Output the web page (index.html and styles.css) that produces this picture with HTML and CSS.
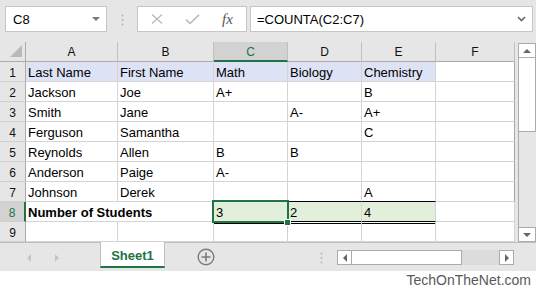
FILE: index.html
```html
<!DOCTYPE html>
<html lang="en">
<head>
    <meta charset="UTF-8">
    <meta name="viewport" content="width=device-width, initial-scale=1.0">
    <title>COUNTA example</title>
    <link rel="stylesheet" href="styles.css">
</head>
<body>
    <div class="formula-bar">
        <div class="name-box">
            <span>C8</span>
            <span class="caret"></span>
        </div>
        <svg class="grip" width="3" height="12" viewBox="0 0 3 12">
            <circle cx="1.5" cy="1.5" r="1" fill="#b5b5b5"/>
            <circle cx="1.5" cy="6" r="1" fill="#b5b5b5"/>
            <circle cx="1.5" cy="10.5" r="1" fill="#b5b5b5"/>
        </svg>
        <div class="fx-buttons">
            <svg class="btn-cancel" width="12" height="10" viewBox="0 0 12 10">
                <path d="M1 0.5 L11 9.5 M11 0.5 L1 9.5" stroke="#b9b9b9" stroke-width="1.3" fill="none"/>
            </svg>
            <svg class="btn-enter" width="15" height="11" viewBox="0 0 15 11">
                <path d="M1 5.5 L5 9.5 L14 0.8" stroke="#b9b9b9" stroke-width="1.6" fill="none"/>
            </svg>
            <span class="fx">fx</span>
        </div>
        <div class="formula-input">
            <span>=COUNTA(C2:C7)</span>
            <svg width="9" height="6" viewBox="0 0 9 6">
                <path d="M1 1 L4.5 4.5 L8 1" stroke="#666" stroke-width="1.6" fill="none"/>
            </svg>
        </div>
    </div>

    <div class="sheet">
        <div class="grid">
            <div class="corner"><span class="select-all"></span></div>
            <div class="col-head">A</div>
            <div class="col-head">B</div>
            <div class="col-head sel">C</div>
            <div class="col-head">D</div>
            <div class="col-head">E</div>
            <div class="col-head">F</div>

            <div class="row-head">1</div>
            <div class="cell title">Last Name</div>
            <div class="cell title">First Name</div>
            <div class="cell title">Math</div>
            <div class="cell title">Biology</div>
            <div class="cell title">Chemistry</div>
            <div class="cell"></div>

            <div class="row-head">2</div>
            <div class="cell">Jackson</div>
            <div class="cell">Joe</div>
            <div class="cell">A+</div>
            <div class="cell"></div>
            <div class="cell">B</div>
            <div class="cell"></div>

            <div class="row-head">3</div>
            <div class="cell">Smith</div>
            <div class="cell">Jane</div>
            <div class="cell"></div>
            <div class="cell">A-</div>
            <div class="cell">A+</div>
            <div class="cell"></div>

            <div class="row-head">4</div>
            <div class="cell">Ferguson</div>
            <div class="cell">Samantha</div>
            <div class="cell"></div>
            <div class="cell"></div>
            <div class="cell">C</div>
            <div class="cell"></div>

            <div class="row-head">5</div>
            <div class="cell">Reynolds</div>
            <div class="cell">Allen</div>
            <div class="cell">B</div>
            <div class="cell">B</div>
            <div class="cell"></div>
            <div class="cell"></div>

            <div class="row-head">6</div>
            <div class="cell">Anderson</div>
            <div class="cell">Paige</div>
            <div class="cell">A-</div>
            <div class="cell"></div>
            <div class="cell"></div>
            <div class="cell"></div>

            <div class="row-head">7</div>
            <div class="cell">Johnson</div>
            <div class="cell">Derek</div>
            <div class="cell above-total"></div>
            <div class="cell above-total"></div>
            <div class="cell above-total">A</div>
            <div class="cell"></div>

            <div class="row-head sel">8</div>
            <div class="cell label">Number of Students</div>
            <div class="cell total active">3<span class="fill-handle"></span></div>
            <div class="cell total">2</div>
            <div class="cell total">4</div>
            <div class="cell"></div>

            <div class="row-head">9</div>
            <div class="cell"></div>
            <div class="cell"></div>
            <div class="cell"></div>
            <div class="cell"></div>
            <div class="cell"></div>
            <div class="cell"></div>
        </div>

        <div class="vscroll">
            <div class="vbtn"><span class="arrow-up"></span></div>
            <div class="vthumb"></div>
            <div class="vtrack"></div>
            <div class="vbtn"><span class="arrow-down"></span></div>
        </div>
    </div>

    <div class="tab-bar">
        <div class="tab-nav">
            <span class="nav-left"></span>
            <span class="nav-right"></span>
        </div>
        <div class="tab">Sheet1</div>
        <svg class="add-sheet" width="18" height="18" viewBox="0 0 18 18">
            <circle cx="9" cy="9" r="7.8" stroke="#7b7b7b" stroke-width="1.4" fill="none"/>
            <path d="M9 4.5 V13.5 M4.5 9 H13.5" stroke="#7b7b7b" stroke-width="1.6"/>
        </svg>
        <svg class="tab-grip" width="3" height="12" viewBox="0 0 3 12">
            <circle cx="1.5" cy="1.5" r="1" fill="#b5b5b5"/>
            <circle cx="1.5" cy="6" r="1" fill="#b5b5b5"/>
            <circle cx="1.5" cy="10.5" r="1" fill="#b5b5b5"/>
        </svg>
        <div class="hscroll">
            <div class="hbtn"><span class="arrow-left"></span></div>
            <div class="hthumb"></div>
            <div class="htrack"></div>
            <div class="hbtn"><span class="arrow-right"></span></div>
        </div>
    </div>

    <div class="credit">TechOnTheNet.com</div>
</body>
</html>
```

FILE: styles.css
```css
* {
    box-sizing: border-box;
}

body {
    margin: 0;
    width: 536px;
    height: 296px;
    overflow: hidden;
    background-color: #fff;
    font-family: "Liberation Sans", Arial, sans-serif;
    color: #000;
}

/* formula bar */

.formula-bar {
    display: flex;
    align-items: flex-start;
    height: 42px;
    padding: 6px 0 0 5px;
    background-color: #e6e6e6;
}

.name-box {
    display: flex;
    align-items: center;
    justify-content: space-between;
    width: 102px;
    height: 26px;
    padding: 0 6px 0 7px;
    background-color: #fff;
    border: 1px solid #c6c6c6;
    font-size: 13px;
}

.caret {
    width: 0;
    height: 0;
    border-left: 4px solid transparent;
    border-right: 4px solid transparent;
    border-top: 4px solid #7a7a7a;
}

.grip {
    margin: 8px 13px 0 14px;
}

.fx-buttons {
    display: flex;
    align-items: center;
    width: 110px;
    height: 26px;
    padding-left: 13px;
    background-color: #fff;
    border: 1px solid #c6c6c6;
}

.btn-enter {
    margin-left: 22px;
}

.fx {
    margin-left: 22px;
    font-family: "Liberation Serif", serif;
    font-style: italic;
    font-size: 15px;
    color: #555;
}

.formula-input {
    display: flex;
    align-items: center;
    justify-content: space-between;
    width: 283px;
    height: 26px;
    margin-left: 3px;
    padding: 0 6px 0 6px;
    background-color: #fff;
    border: 1px solid #c6c6c6;
    font-size: 13px;
}

/* grid */

.sheet {
    display: flex;
    height: 200px;
    background-color: #e6e6e6;
}

.grid {
    display: grid;
    grid-template-columns: 26px 92px 96px 74px 74px 74px 79px;
    grid-template-rows: repeat(10, 20px);
    width: 515px;
    background-color: #fff;
}

.corner {
    display: flex;
    align-items: flex-end;
    justify-content: flex-end;
    padding: 0 3px 4px 0;
    background-color: #e6e6e6;
    border-right: 1px solid #ababab;
    border-bottom: 1px solid #ababab;
}

.select-all {
    width: 0;
    height: 0;
    border-left: 12px solid transparent;
    border-bottom: 12px solid #b9b9b9;
}

.col-head {
    padding-top: 1px;
    line-height: 18px;
    font-size: 12px;
    text-align: center;
    color: #111;
    background-color: #e6e6e6;
    border-right: 1px solid #c0c0c0;
    border-bottom: 1px solid #ababab;
}

.col-head:last-child {
    border-right-color: #ababab;
}

.col-head.sel {
    color: #217346;
    background-color: #d2d2d2;
    border-bottom: 2px solid #217346;
}

.row-head {
    padding-top: 3px;
    line-height: 16px;
    font-size: 12px;
    text-align: center;
    color: #111;
    background-color: #e6e6e6;
    border-right: 1px solid #ababab;
    border-bottom: 1px solid #cfcfcf;
}

.row-head.sel {
    color: #217346;
    background-color: #d2d2d2;
    border-right: 2px solid #217346;
}

.cell {
    padding: 2px 2px 0 2px;
    line-height: 17px;
    font-size: 13px;
    white-space: nowrap;
    overflow: hidden;
    border-right: 1px solid #d4d4d4;
    border-bottom: 1px solid #d4d4d4;
}

.cell:nth-child(7n) {
    border-right-color: #a6a6a6;
}

.cell.title {
    background-color: #dde2f5;
}

.cell.above-total {
    border-bottom-color: #000;
}

.cell.label {
    grid-column: span 2;
    font-weight: bold;
}

.cell.total {
    overflow: visible;
    background-color: #e2efda;
    border-bottom-color: #000;
    box-shadow: 0 1px 0 #fff, 0 2px 0 #000;
}

.cell.active {
    position: relative;
}

.cell.active::before {
    content: "";
    position: absolute;
    left: -2px;
    top: -2px;
    right: -2px;
    bottom: -2px;
    border: 2px solid #217346;
}

.fill-handle {
    position: absolute;
    right: -4px;
    bottom: -5px;
    width: 7px;
    height: 7px;
    background-color: #217346;
    border: 1px solid #fff;
}

/* scroll bars */

.vscroll {
    display: flex;
    flex-direction: column;
    width: 18px;
    margin: 1px 0 0 3px;
}

.vbtn {
    display: flex;
    align-items: center;
    justify-content: center;
    height: 15px;
    background-color: #fff;
    border: 1px solid #ababab;
}

.vthumb {
    height: 74px;
    background-color: #fff;
    border: 1px solid #ababab;
    border-top: none;
}

.vtrack {
    flex: 1;
    background-color: #e6e6e6;
    border-left: 1px solid #ababab;
}

.arrow-up {
    border-left: 4px solid transparent;
    border-right: 4px solid transparent;
    border-bottom: 4px solid #666;
}

.arrow-down {
    border-left: 4px solid transparent;
    border-right: 4px solid transparent;
    border-top: 4px solid #666;
}

/* sheet tabs */

.tab-bar {
    display: flex;
    align-items: flex-start;
    height: 29px;
    background-color: #e6e6e6;
    border-top: 1px solid #bfbfbf;
}

.tab-nav {
    display: flex;
    gap: 24px;
    width: 100px;
    padding: 11px 0 0 27px;
}

.nav-left {
    border-top: 4px solid transparent;
    border-bottom: 4px solid transparent;
    border-right: 4px solid #c4c4c4;
}

.nav-right {
    border-top: 4px solid transparent;
    border-bottom: 4px solid transparent;
    border-left: 4px solid #c4c4c4;
}

.tab {
    width: 65px;
    height: 26px;
    margin-top: -1px;
    padding-top: 3px;
    line-height: 21px;
    font-size: 13px;
    font-weight: bold;
    text-align: center;
    color: #217346;
    background-color: #fff;
    border-left: 1px solid #bfbfbf;
    border-right: 1px solid #bfbfbf;
    border-bottom: 2px solid #217346;
}

.add-sheet {
    margin: 5px 0 0 32px;
}

.tab-grip {
    margin: 9px 0 0 105px;
}

.hscroll {
    display: flex;
    width: 177px;
    height: 15px;
    margin: 7px 0 0 14px;
}

.hbtn {
    display: flex;
    align-items: center;
    justify-content: center;
    width: 15px;
    background-color: #fff;
    border: 1px solid #ababab;
}

.hthumb {
    width: 110px;
    background-color: #fff;
    border: 1px solid #ababab;
    border-left: none;
}

.htrack {
    flex: 1;
    background-color: #dcdcdc;
}

.arrow-left {
    border-top: 4px solid transparent;
    border-bottom: 4px solid transparent;
    border-right: 4px solid #666;
}

.arrow-right {
    border-top: 4px solid transparent;
    border-bottom: 4px solid transparent;
    border-left: 4px solid #666;
}

.credit {
    padding-right: 5px;
    line-height: 19px;
    font-size: 14px;
    text-align: right;
    color: #595959;
}
```
